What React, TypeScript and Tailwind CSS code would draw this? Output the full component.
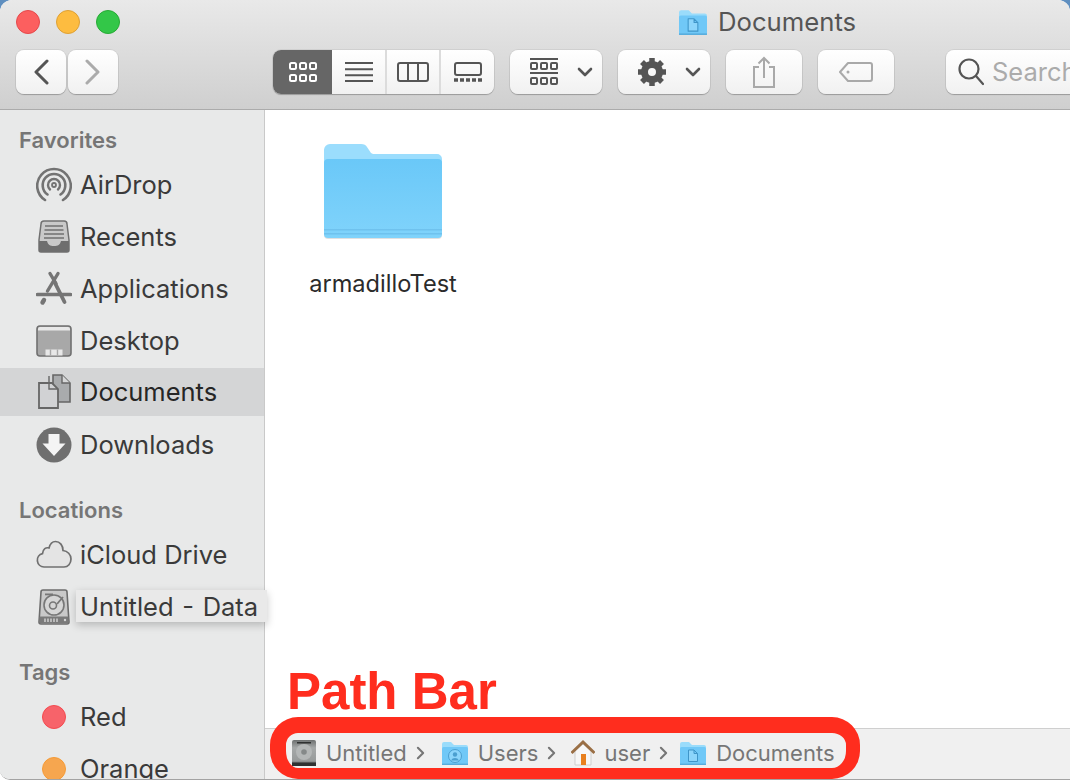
import type { ReactNode } from "react";

const font = "font-['Inter','Noto_Sans',sans-serif]";
const btnBase =
  "flex h-[44px] shrink-0 items-center justify-center rounded-[8px] bg-gradient-to-b from-[#ffffff] to-[#f1f1f1] shadow-[0_0_0_1px_rgba(0,0,0,0.06),0_1px_1px_rgba(0,0,0,0.22)]";
const sectionHead = "flex h-[38px] items-center pl-[19px] text-[22px] font-semibold leading-none text-[#767676]";

function Folder({ glyph, size = "h-[26px] w-[28px]" }: { glyph?: "doc" | "user"; size?: string }) {
  return (
    <svg viewBox="0 0 28 26" className={`${size} shrink-0`}>
      <path d="M1 4a2 2 0 0 1 2-2h7l3 3h12a2 2 0 0 1 2 2v16a2 2 0 0 1-2 2H3a2 2 0 0 1-2-2z" fill="#9adcfb" />
      <rect x="1" y="7" width="26" height="18" rx="1.5" fill="#70c8f7" />
      <rect x="1" y="23.6" width="26" height="1.4" fill="#57acdc" />
      {glyph === "doc" && (
        <path d="M9.500 10h5.500l3.500 3.500v8h-9z M15 10v3.500h3.500" fill="#8cd5fb" stroke="#3f95c8" strokeWidth="1" strokeLinejoin="round" />
      )}
      {glyph === "user" && (
        <>
          <circle cx="14" cy="16" r="6.500" fill="#8cd5fb" stroke="#4b9fd0" strokeWidth="1" />
          <circle cx="14" cy="14.500" r="2.200" fill="#4b9fd0" />
          <path d="M10 20.500a4.500 4.500 0 0 1 8 0" fill="#4b9fd0" />
        </>
      )}
    </svg>
  );
}

function BigFolder() {
  return (
    <svg viewBox="0 0 120 98" className="h-[98px] w-[120px]">
      <defs>
        <linearGradient id="front" x1="0" y1="0" x2="0" y2="1">
          <stop offset="0" stopColor="#6ac8f8" />
          <stop offset="1" stopColor="#80d3fb" />
        </linearGradient>
      </defs>
      <path d="M1 8a6 6 0 0 1 6-6h31c3 0 5 1 6 3l4 6 2 1h64a5 5 0 0 1 5 5v20H1z" fill="#9bddfd" />
      <rect x="1" y="17" width="118" height="79" rx="4" fill="#000" opacity="0.12" transform="translate(0 1)" />
      <rect x="1" y="17" width="118" height="79" rx="4" fill="url(#front)" />
      <path d="M1 87h118v1.500H1z M1 91h118v1.500H1z" fill="#6fc2ee" />
    </svg>
  );
}

const ico = "h-[36px] w-[36px] shrink-0";

function AirDropIcon() {
  return (
    <svg viewBox="0 0 36 36" className={ico} fill="none" stroke="#737373">
      <path d="M9 33A16.800 16.800 0 1 1 27 33" strokeWidth="2.600" strokeLinecap="round" />
      <path d="M11.500 27.500a11.300 11.300 0 1 1 13 0" strokeWidth="2.600" strokeLinecap="round" />
      <path d="M14 22.500a6 6 0 1 1 8 0" strokeWidth="2.400" strokeLinecap="round" />
      <circle cx="18" cy="18" r="2" strokeWidth="1.800" />
    </svg>
  );
}

function RecentsIcon() {
  return (
    <svg viewBox="0 0 36 36" className={ico}>
      <path d="M5 5a3 3 0 0 1 3-3h20a3 3 0 0 1 3 3l2 16v10a2 2 0 0 1-2 2H5a2 2 0 0 1-2-2V21z" fill="#c9c9c9" stroke="#707070" strokeWidth="1.500" />
      <path d="M9 7h18M8.500 11h19M8 15h20M8 19h20" stroke="#707070" strokeWidth="1.600" />
      <path d="M3 22h8c1 4 3 5 7 5s6-1 7-5h8v9a2 2 0 0 1-2 2H5a2 2 0 0 1-2-2z" fill="#6e6e6e" />
    </svg>
  );
}

function AppsIcon() {
  return (
    <svg viewBox="0 0 36 36" className={ico} fill="none" stroke="#757575" strokeLinecap="round">
      <path d="M14 2.500l6 10" strokeWidth="3.400" />
      <path d="M22 2.500L11.500 20" strokeWidth="3.400" />
      <path d="M18.500 11l10 20" strokeWidth="3.800" />
      <path d="M1.500 23.500h33" strokeWidth="3.600" />
      <path d="M6.500 31.500l1.500-2.500" strokeWidth="4.400" />
    </svg>
  );
}

function DesktopIcon() {
  return (
    <svg viewBox="0 0 36 36" className={ico}>
      <rect x="1" y="3" width="34" height="30" rx="3" fill="#a8a8a8" stroke="#707070" strokeWidth="1.600" />
      <path d="M2 7.500V6a2 2 0 0 1 2-2h28a2 2 0 0 1 2 2v1.500z" fill="#e8e8e8" />
      <rect x="9.500" y="26.500" width="17" height="6" fill="#e8e8e8" />
      <path d="M14.500 26.500v6M21.500 26.500v6" stroke="#a8a8a8" strokeWidth="1.400" />
    </svg>
  );
}

function DocumentsIcon() {
  return (
    <svg viewBox="0 0 36 36" className={ico}>
      <path d="M13 1h9l8 8v19H13z" fill="#a9abad" stroke="#666" strokeWidth="1.600" transform="translate(4 0)" />
      <path d="M26 1v8h8" fill="#d6d7d8" stroke="#666" strokeWidth="1.400" />
      <path d="M3 9h13l6 6v19H3z" fill="#d1d2d4" stroke="#666" strokeWidth="1.800" />
      <path d="M13 2v13h9" fill="none" stroke="#666" strokeWidth="1.400" />
    </svg>
  );
}

function DownloadsIcon() {
  return (
    <svg viewBox="0 0 36 36" className={ico}>
      <circle cx="18" cy="18" r="17.500" fill="#6f6f6f" />
      <path d="M12.500 7h11v9.500h6L18 29 6.500 16.500h6z" fill="#f4f4f4" />
    </svg>
  );
}

function CloudIcon() {
  return (
    <svg viewBox="0 0 36 36" className={ico}>
      <path
        d="M8 30a6.800 6.800 0 0 1-1.500-13.400C7 12 10 10 13 11c1-4 3.500-6.500 6.500-6.500 4.500 0 7.500 4 7.500 9 4.500 0.500 8 4 8 8.500S32 30 28 30z"
        fill="#e4e4e4"
        stroke="#707070"
        strokeWidth="1.700"
      />
    </svg>
  );
}

function DiskIcon() {
  return (
    <svg viewBox="0 0 36 36" className={ico}>
      <path d="M5 3a2 2 0 0 1 2-2h22a2 2 0 0 1 2 2l2 30a2 2 0 0 1-2 2H5a2 2 0 0 1-2-2z" fill="#c9c9c9" stroke="#6c6c6c" strokeWidth="1.600" />
      <rect x="9" y="4.500" width="8" height="1.800" fill="#777" />
      <circle cx="18" cy="16" r="10" fill="#d6d6d6" stroke="#777" strokeWidth="1.600" />
      <circle cx="17" cy="16.500" r="3.500" fill="none" stroke="#777" strokeWidth="1.600" />
      <path d="M21 15l6-7" stroke="#777" strokeWidth="1.800" />
      <rect x="3.500" y="27.500" width="29" height="7" rx="1" fill="#7a7a7a" />
      <path d="M9 29.500v3.500M12 29.500v3.500M15 29.500v3.500M18 29.500v3.500M21 29.500v3.500" stroke="#d5d5d5" strokeWidth="1.400" />
      <circle cx="29" cy="31" r="1.200" fill="#d5d5d5" />
    </svg>
  );
}

function Row({ icon, label, active }: { icon: ReactNode; label: string; active?: boolean }) {
  return (
    <div className={active ? "pt-px pb-[3px]" : "py-[2px]"}>
      <div className={`flex h-[48px] items-center gap-[8px] pl-[36px] ${active ? "bg-[#d4d5d6] text-[#262626]" : "text-[#3a3a3a]"}`}>
        {icon}
        <span className="text-[25.500px] leading-none">{label}</span>
      </div>
    </div>
  );
}

function TagRow({ color, edge, label }: { color: string; edge: string; label: string }) {
  return (
    <div className="flex h-[52px] items-center pl-[42px] text-[#3a3a3a]">
      <span className={`h-[24px] w-[24px] rounded-full border-[1.500px] ${color} ${edge}`} />
      <span className="ml-[14px] text-[25.500px] leading-none">{label}</span>
    </div>
  );
}

function Sidebar() {
  return (
    <aside className="w-[265px] shrink-0 border-r border-r-[#c9c9c9] bg-[#e8e9e9] pt-[11px]">
      <div className={sectionHead}>Favorites</div>
      <Row icon={<AirDropIcon />} label="AirDrop" />
      <Row icon={<RecentsIcon />} label="Recents" />
      <Row icon={<AppsIcon />} label="Applications" />
      <Row icon={<DesktopIcon />} label="Desktop" />
      <Row icon={<DocumentsIcon />} label="Documents" active />
      <Row icon={<DownloadsIcon />} label="Downloads" />
      <div className={`mt-[20px] ${sectionHead}`}>Locations</div>
      <Row icon={<CloudIcon />} label="iCloud Drive" />
      <div className="relative">
        <Row icon={<DiskIcon />} label="" />
        <div className="absolute left-[76px] top-[9px] z-10 flex h-[32px] w-[191px] items-center whitespace-pre bg-[#e9e9e9] pl-[4px] pt-[2px] text-[25.500px] leading-none text-[#3a3a3a] shadow-[0_3px_8px_rgba(0,0,0,0.22)] [word-spacing:1.500px]">
          Untitled - Data
        </div>
      </div>
      <div className={`mt-[20px] ${sectionHead}`}>Tags</div>
      <TagRow color="bg-[#f7636a]" edge="border-[#f44a4f]" label="Red" />
      <TagRow color="bg-[#f6a64f]" edge="border-[#f59a35]" label="Orange" />
    </aside>
  );
}

function Toolbar() {
  return (
    <header className="h-[110px] shrink-0 border-b border-b-[#ababab] bg-gradient-to-b from-[#e9e9e9] to-[#cfcfcf] pl-[16px] pt-[10px]">
      <div className="flex h-[24px] items-center">
        <span className="h-[24px] w-[24px] rounded-full border border-[#e5484b] bg-[#fc5f5f]" />
        <span className="ml-[16px] h-[24px] w-[24px] rounded-full border border-[#dea034] bg-[#fdbc40]" />
        <span className="ml-[16px] h-[24px] w-[24px] rounded-full border border-[#27aa35] bg-[#33c748]" />
        <div className="ml-[557px] flex items-center gap-[9px]">
          <Folder glyph="doc" size="h-[28px] w-[32px]" />
          <span className="text-[25.700px] leading-none text-[#555555]">Documents</span>
        </div>
      </div>
      <div className="mt-[16px] flex items-center">
        <button className={`${btnBase} w-[50px]`}>
          <svg viewBox="0 0 16 26" className="h-[26px] w-[16px]" fill="none" stroke="#555" strokeWidth="3" strokeLinecap="round" strokeLinejoin="round">
            <path d="M14 2L3 13l11 11" />
          </svg>
        </button>
        <button className={`${btnBase} ml-[2px] w-[50px]`}>
          <svg viewBox="0 0 16 26" className="h-[26px] w-[16px]" fill="none" stroke="#ababab" strokeWidth="3" strokeLinecap="round" strokeLinejoin="round">
            <path d="M2 2l11 11L2 24" />
          </svg>
        </button>

        <div className={`${btnBase} ml-[155px] w-[221px] justify-start overflow-hidden`}>
          <div className="flex h-[46px] w-[59px] items-center justify-center bg-[#666666]">
            <svg viewBox="0 0 28 20" className="h-[20px] w-[28px]" fill="none" stroke="#fff" strokeWidth="2">
              <rect x="1" y="1" width="6" height="6" rx="1.500" />
              <rect x="11" y="1" width="6" height="6" rx="1.500" />
              <rect x="21" y="1" width="6" height="6" rx="1.500" />
              <rect x="1" y="13" width="6" height="6" rx="1.500" />
              <rect x="11" y="13" width="6" height="6" rx="1.500" />
              <rect x="21" y="13" width="6" height="6" rx="1.500" />
            </svg>
          </div>
          <div className="flex h-full w-[53px] items-center justify-center">
            <svg viewBox="0 0 28 20" className="h-[20px] w-[28px]" stroke="#555" strokeWidth="2">
              <path d="M0 1h28M0 7.300h28M0 13.300h28M0 19h28" />
            </svg>
          </div>
          <div className="flex h-full w-[54px] items-center justify-center border-l-2 border-l-[#dcdcdc]">
            <svg viewBox="0 0 32 20" className="h-[20px] w-[32px]" fill="none" stroke="#555" strokeWidth="2">
              <rect x="1" y="1" width="30" height="18" rx="2" />
              <path d="M11 1v18M21 1v18" />
            </svg>
          </div>
          <div className="flex h-full w-[55px] items-center justify-center border-l-2 border-l-[#dcdcdc]">
            <svg viewBox="0 0 28 20" className="h-[20px] w-[28px]" fill="none" stroke="#555" strokeWidth="2">
              <rect x="1" y="1" width="26" height="12" rx="2" />
              <path d="M0 18h4M6 18h4M12 18h4M18 18h4M24 18h4" strokeWidth="3.500" />
            </svg>
          </div>
        </div>

        <button className={`${btnBase} ml-[16px] w-[92px] justify-start gap-[19px] pl-[20px]`}>
          <svg viewBox="0 0 28 28" className="h-[28px] w-[28px]" fill="none" stroke="#555" strokeWidth="2">
            <path d="M0 1h28M0 15h28" />
            <rect x="1" y="5" width="6" height="6" rx="1" />
            <rect x="11" y="5" width="6" height="6" rx="1" />
            <rect x="21" y="5" width="6" height="6" rx="1" />
            <rect x="1" y="20" width="6" height="6" rx="1" />
            <rect x="11" y="20" width="6" height="6" rx="1" />
            <rect x="21" y="20" width="6" height="6" rx="1" />
          </svg>
          <svg viewBox="0 0 16 10" className="h-[10px] w-[16px]" fill="none" stroke="#555" strokeWidth="2.600" strokeLinecap="round" strokeLinejoin="round">
            <path d="M2 2l6 6 6-6" />
          </svg>
        </button>

        <button className={`${btnBase} ml-[16px] w-[92px] justify-start gap-[19px] pl-[20px]`}>
          <svg viewBox="0 0 28 28" className="h-[28px] w-[28px]" fill="none" stroke="#555">
            <circle cx="14" cy="14" r="7.500" strokeWidth="7" />
            <path d="M14 0v5M14 23v5M0 14h5M23 14h5M4 4l3.500 3.500M20.500 20.500L24 24M24 4l-3.500 3.500M7.500 20.500L4 24" strokeWidth="5.500" />
          </svg>
          <svg viewBox="0 0 16 10" className="h-[10px] w-[16px]" fill="none" stroke="#555" strokeWidth="2.600" strokeLinecap="round" strokeLinejoin="round">
            <path d="M2 2l6 6 6-6" />
          </svg>
        </button>

        <button className={`${btnBase} ml-[16px] w-[76px]`}>
          <svg viewBox="0 0 24 32" className="h-[32px] w-[24px]" fill="none" stroke="#a9a9a9" strokeWidth="2">
            <path d="M7 11H2v20h20V11h-5" />
            <path d="M12 22V2M6.500 7.500L12 2l5.500 5.500" />
          </svg>
        </button>

        <button className={`${btnBase} ml-[16px] w-[76px]`}>
          <svg viewBox="0 0 34 20" className="h-[20px] w-[34px]" fill="none" stroke="#a9a9a9" strokeWidth="2">
            <path d="M9 1h22a2 2 0 0 1 2 2v14a2 2 0 0 1-2 2H9l-8-9z" strokeLinejoin="round" />
            <circle cx="9" cy="10" r="1.500" fill="#a9a9a9" stroke="none" />
          </svg>
        </button>

        <div className={`${btnBase} ml-[52px] w-[200px] justify-start pl-[12px]`}>
          <svg viewBox="0 0 26 28" className="h-[28px] w-[26px]" fill="none" stroke="#555" strokeWidth="2.200" strokeLinecap="round">
            <circle cx="11" cy="11" r="9.500" />
            <path d="M18 18l7 8" />
          </svg>
          <span className="ml-[8px] text-[25.500px] leading-none text-[#ababab]">Search</span>
        </div>
      </div>
    </header>
  );
}

function PathItem({ icon, label, after }: { icon: ReactNode; label: string; after?: string }) {
  return (
    <div className="flex items-center">
      {icon}
      <span className="ml-[9px] text-[22px] leading-none text-[#767676]">{label}</span>
      {after && (
        <svg viewBox="0 0 10 16" className={`ml-[9px] h-[14px] w-[9px] ${after}`} fill="none" stroke="#767676" strokeWidth="2.400" strokeLinecap="round" strokeLinejoin="round">
          <path d="M2 2l6 6-6 6" />
        </svg>
      )}
    </div>
  );
}

function PathBar() {
  return (
    <footer className="flex h-[51px] shrink-0 items-center border-t border-t-[#cfcfcf] bg-[#f0f0f0] pb-[2px] pl-[26px]">
      <PathItem
        label="Untitled"
        after="mr-[16px]"
        icon={
          <svg viewBox="0 0 26 28" className="h-[28px] w-[26px]">
            <defs>
              <linearGradient id="disk" x1="0" y1="0" x2="0" y2="1">
                <stop offset="0" stopColor="#6d7070" />
                <stop offset="0.300" stopColor="#a5a8a8" />
                <stop offset="0.800" stopColor="#989b9b" />
                <stop offset="1" stopColor="#3a3c3c" />
              </linearGradient>
            </defs>
            <rect x="1" y="1" width="24" height="26" rx="2" fill="url(#disk)" />
            <rect x="6" y="3" width="14" height="1.500" fill="#2f3131" />
            <circle cx="13" cy="13" r="8" fill="#b4b7b7" />
            <circle cx="13" cy="13" r="2.800" fill="#858989" />
            <rect x="1" y="23.500" width="24" height="3.500" fill="#2f3131" />
          </svg>
        }
      />
      <PathItem label="Users" after="mr-[15px]" icon={<Folder glyph="user" />} />
      <PathItem
        label="user"
        after="mr-[11px]"
        icon={
          <svg viewBox="0 0 24 28" className="h-[28px] w-[24px]">
            <path d="M4 12l8-7 8 7v14H4z" fill="#f7f7f7" stroke="#cfcfcf" />
            <path d="M0.500 14L12 3l11.500 11" fill="none" stroke="#9a6f45" strokeWidth="3" />
            <rect x="10" y="15" width="5" height="11" fill="#e8801f" />
          </svg>
        }
      />
      <PathItem label="Documents" icon={<Folder glyph="doc" />} />
    </footer>
  );
}

export default function App() {
  return (
    <div className={`${font} relative h-[780px] w-[1070px] overflow-hidden bg-gradient-to-b from-[#5f8fc0] from-[2%] to-white to-[3%]`}>
      <div className="flex h-full flex-col overflow-hidden rounded-t-[12px] rounded-bl-[10px] border-b border-b-[#a3a3a3] bg-white">
        <Toolbar />
        <div className="flex min-h-0 flex-1">
          <Sidebar />
          <main className="flex min-w-0 flex-1 flex-col bg-white">
            <div className="flex-1 pl-[44px] pt-[32px]">
              <div className="flex w-[148px] flex-col items-center">
                <BigFolder />
                <span className="mt-[32px] whitespace-nowrap text-[23.600px] leading-none text-[#2b2b2b]">armadilloTest</span>
              </div>
            </div>
            <PathBar />
          </main>
        </div>
      </div>
      {/* annotation over the screenshot */}
      <div className="absolute left-[287px] top-[663px] font-['Liberation_Sans',sans-serif] text-[51px] font-bold leading-[58px] text-[#ff2d1e]">
        Path Bar
      </div>
      <div className="absolute left-[270px] top-[717px] h-[62px] w-[590px] rounded-[28px] border-t-[16px] border-r-[14px] border-b-[11px] border-l-[16px] border-[#ff2d1e]" />
    </div>
  );
}
